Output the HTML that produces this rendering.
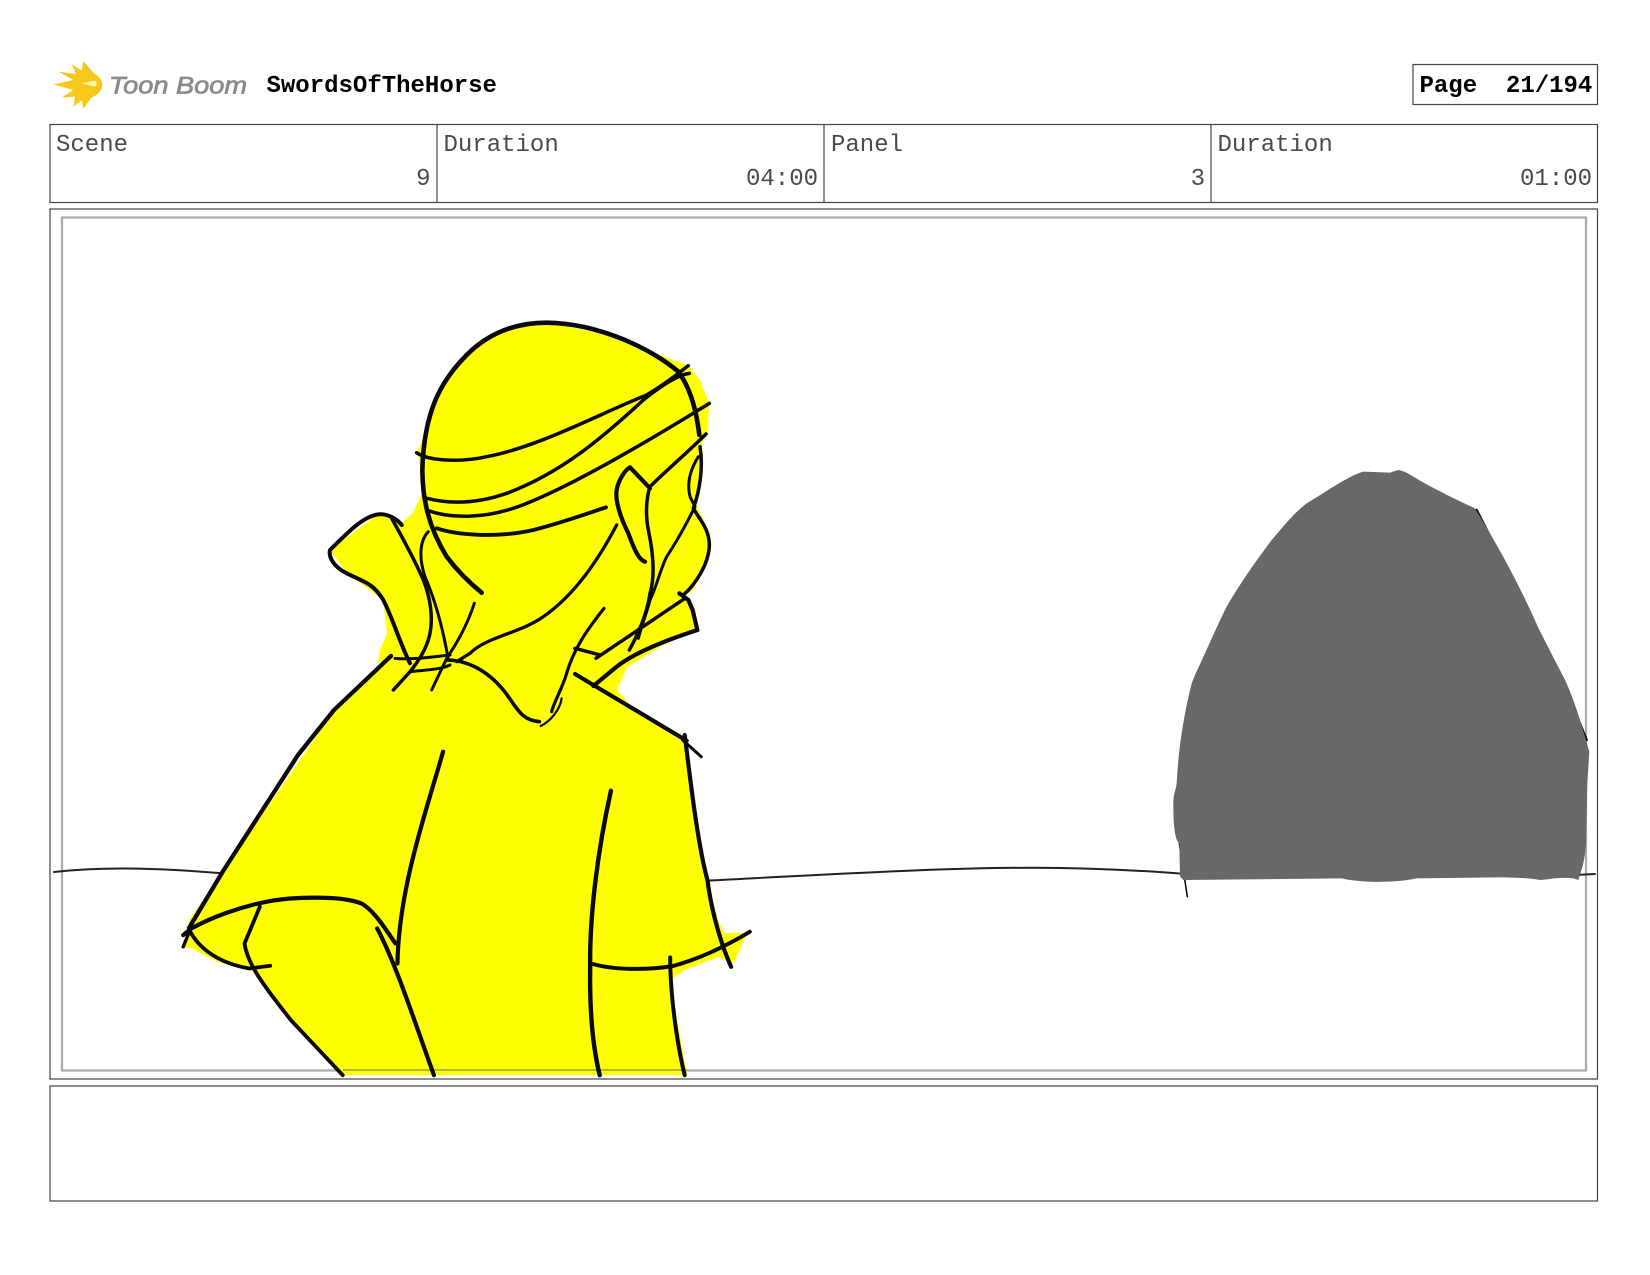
<!DOCTYPE html>
<html>
<head>
<meta charset="utf-8">
<title>SwordsOfTheHorse</title>
<style>
html,body{margin:0;padding:0;background:#fff;width:1650px;height:1275px;overflow:hidden}
svg{display:block;position:absolute;left:0;top:0}
.s{fill:none;stroke:#0a0a0a;stroke-linecap:round;stroke-linejoin:round;vector-effect:non-scaling-stroke}
.m{font-family:"Liberation Mono",monospace;font-size:24px;fill:#4a4a4a}
.b{font-family:"Liberation Mono",monospace;font-size:24px;font-weight:bold;fill:#000}
</style>
</head>
<body>
<svg width="1650" height="1275" viewBox="0 0 1650 1275" xmlns="http://www.w3.org/2000/svg">
<rect width="1650" height="1275" fill="#fff"/>

<!-- logo -->
<g transform="translate(40,50) scale(.3333)">
<path fill="#f8c71c" d="M40 103 L100 90 L55 65 L108 72 L95 42 L125 62 L130 33 L158 66 C178 80 187 90 187 103 C187 120 175 135 155 142 L130 177 L125 150 L100 170 L105 140 L65 143 L100 120 Z"/>
<path fill="#fff3b0" d="M125 100 L165 92 C172 98 172 106 165 110 Z"/>
</g>
<text x="109" y="93.5" font-family="'Liberation Sans',sans-serif" font-style="italic" font-size="24" fill="#8a8a8a" stroke="#8a8a8a" stroke-width=".7" textLength="138" lengthAdjust="spacingAndGlyphs">Toon Boom</text>
<text class="b" x="266.5" y="92">SwordsOfTheHorse</text>

<!-- page box -->
<rect x="1413" y="64.5" width="184.5" height="40" fill="#fff" stroke="#444" stroke-width="1.2"/>
<text class="b" x="1419.5" y="92" xml:space="preserve">Page  21/194</text>

<!-- header table -->
<rect x="50" y="124.5" width="1547.5" height="78" fill="#fff" stroke="#444" stroke-width="1.2"/>
<path d="M437 124.5V202.5M824 124.5V202.5M1211 124.5V202.5" stroke="#444" stroke-width="1.2" fill="none"/>
<text class="m" x="56" y="151">Scene</text>
<text class="m" x="443.5" y="151">Duration</text>
<text class="m" x="831" y="151">Panel</text>
<text class="m" x="1217.5" y="151">Duration</text>
<text class="m" x="430.5" y="185" text-anchor="end">9</text>
<text class="m" x="818" y="185" text-anchor="end">04:00</text>
<text class="m" x="1205" y="185" text-anchor="end">3</text>
<text class="m" x="1592" y="185" text-anchor="end">01:00</text>

<!-- panel -->
<rect x="50" y="209" width="1547.5" height="870" fill="#fff" stroke="#444" stroke-width="1.2"/>
<rect x="62" y="217.5" width="1524" height="853" fill="none" stroke="#aaa" stroke-width="2.2"/>

<!-- horizon -->
<path class="s" style="stroke:#222" stroke-width="2" d="M54 872 C90 868 140 866 230 874"/>
<path class="s" style="stroke:#222" stroke-width="2" d="M700 881 C800 876 960 866 1060 868 C1110 869 1150 871 1185 874"/>
<path class="s" style="stroke:#222" stroke-width="2" d="M1575 875 L1595 874"/>

<!-- yellow figure -->
<path fill="#ffff00" d="M547 323 L600 333 L647 350 L673 360 L688 365 L700 380 L709 403 L708 430 L702 443 L703 467 L697 507 L710 533 L708 563 L693 590 L683 597 L693 610 L698 630 L667 643 L627 667 L617 690 L633 708 L685 737 L707.5 880 L718 920 L724 933 L747 933 L734 963 L718 957 L685 970 L670 980 L687 1075 L343 1075 L291 1020 L262 983 L251.5 970 L220 963 L200 953 L191 948 L183 948 L189 920 L222.5 872 L334.5 710 L391.7 656 L378 663 L380 650 L387 633 L383 600 L347 573 L330 550 L378 514 L403 522 L413 513 L422 493 L418 450 L425 433 L432 405 L446 378 L467 355 L490 338 L513 327 Z"/>
<path d="M343 1070 H687" stroke="#b5b53a" stroke-width="2" fill="none"/>

<!-- head strokes -->
<g transform="translate(300,300) scale(.33333)">
<path class="s" stroke-width="4.6" d="M1198 405 C1190 340 1175 270 1135 215 C1060 150 900 70 740 68 C640 68 560 105 500 165 C425 240 372 330 367 510 C368 600 385 680 440 770 C470 810 510 850 545 878"/>
<path class="s" stroke-width="3.5" d="M350 458 C380 480 470 490 560 470 C720 440 900 340 1040 285 C1090 255 1130 225 1165 197"/>
<path class="s" stroke-width="3.5" d="M380 595 C440 610 520 615 620 580 C780 520 900 420 1030 300 C1080 260 1130 225 1168 220"/>
<path class="s" stroke-width="3.5" d="M385 632 C450 655 560 660 680 610 C830 550 1050 420 1228 310"/>
<path class="s" stroke-width="3.8" d="M410 685 C470 705 590 715 700 690 C780 670 850 645 918 622"/>
<path class="s" stroke-width="4.2" d="M1035 785 C1015 780 1000 740 985 700 C960 650 945 600 950 570 C955 540 975 510 990 502 L1050 565"/>
<path class="s" stroke-width="3.5" d="M1218 402 C1160 460 1100 510 1050 560 C1040 590 1035 640 1045 690 C1060 760 1065 830 1050 880 C1040 950 1010 1010 988 1050"/>
<path class="s" stroke-width="3.5" d="M1200 440 C1210 500 1200 570 1180 625 C1200 660 1230 690 1228 740 C1225 790 1190 850 1150 885"/>
<path class="s" stroke-width="3" d="M1195 470 C1170 510 1160 550 1170 590 L1185 620 C1170 650 1140 710 1100 770 C1080 810 1070 860 1050 900 C1040 940 1030 960 1015 1015"/>
<path class="s" stroke-width="3.5" d="M888 1075 L1155 895"/>
<path class="s" stroke-width="4.2" d="M1138 880 L1165 900 L1178 930 L1192 990 C1100 1020 1000 1060 950 1100 L880 1158"/>
<path class="s" stroke-width="3.3" d="M950 675 C900 770 830 880 730 950 C660 1000 560 1010 510 1060 L470 1085"/>
<path class="s" stroke-width="3.5" d="M825 1045 L900 1065"/>
<path class="s" stroke-width="3.2" d="M912 925 C860 990 820 1050 800 1120 C785 1170 760 1210 755 1235"/>
<path class="s" stroke-width="2.2" d="M785 1195 C780 1230 750 1265 722 1278"/>
<path class="s" stroke-width="3" d="M285 1075 C340 1080 400 1070 450 1065"/>
<path class="s" stroke-width="3" d="M330 1115 C370 1110 420 1110 450 1095"/>
<path class="s" stroke-width="3.6" d="M440 1080 C500 1080 560 1110 610 1170 C650 1220 660 1260 718 1265"/>
<path class="s" stroke-width="4" d="M305 675 C290 655 260 640 235 643 C190 650 150 690 90 750 C85 770 100 800 140 820 C190 845 220 850 250 900 C280 960 300 1030 330 1090"/>
<path class="s" stroke-width="3.5" d="M275 655 C300 700 340 770 370 840 C390 890 400 950 390 1000 C380 1050 350 1090 330 1115 L280 1170"/>
<path class="s" stroke-width="3" d="M385 695 C360 720 355 770 375 830 C405 900 430 990 445 1080"/>
<path class="s" stroke-width="3" d="M523 910 C500 980 470 1030 440 1075 L395 1170"/>
<path class="s" stroke-width="4.2" d="M825 1122 L880 1155 L1160 1322"/>
</g>

<!-- left shoulder as single stroke -->
<path class="s" stroke-width="4.3" d="M391 656 L334 710 L298 755 L222.5 872 L189 928"/>

<!-- body strokes -->
<g transform="translate(150,700) scale(.4145,.3335)">
<path class="s" stroke-width="4.2" d="M80 705 L100 685 C150 650 220 620 280 605 C340 590 460 585 510 610 C540 630 570 690 592 730"/>
<path class="s" stroke-width="3.8" d="M95 690 C120 750 170 790 240 805 L290 797"/>
<path class="s" stroke-width="3.4" d="M80 740 L100 680"/>
<path class="s" stroke-width="3.8" d="M265 620 L228 730 C235 790 270 850 340 960 L465 1125"/>
<path class="s" stroke-width="4.2" d="M707 155 C670 320 600 560 597 790"/>
<path class="s" stroke-width="4.2" d="M548 685 C590 780 640 970 685 1125"/>
<path class="s" stroke-width="4.4" d="M1112 272 C1080 450 1060 650 1062 800 C1060 950 1070 1050 1085 1125"/>
<path class="s" stroke-width="4.2" d="M1290 105 C1300 200 1320 430 1345 540 C1355 640 1380 740 1402 800"/>
<path class="s" stroke-width="3" d="M1285 120 L1330 170"/>
<path class="s" stroke-width="4" d="M1070 792 C1120 810 1200 810 1260 798 C1330 775 1400 730 1447 695"/>
<path class="s" stroke-width="4" d="M1255 772 C1255 900 1275 1050 1290 1125"/>
</g>

<!-- gray rock -->
<g transform="translate(1150,450) scale(.33333)">
<path class="s" stroke-width="2.4" d="M980 180 L1225 660 L1310 870"/>
<path class="s" stroke-width="2.4" d="M240 470 L310 360"/>
<path class="s" stroke-width="1.6" d="M100 860 C90 920 84 980 82 1030"/>
<path class="s" stroke-width="1.6" d="M88 1180 L112 1340"/>
<path fill="#686868" d="M100 1290 L90 1280 L88 1180 C75 1170 70 1130 70 1060 C70 1030 78 1020 80 1000 C85 900 100 800 125 700 L135 675 C170 600 200 530 230 470 C270 400 320 330 365 270 C400 230 430 190 470 160 C530 125 590 80 640 65 L720 68 L745 60 C770 65 790 80 810 92 C860 120 920 150 975 175 C1040 280 1100 390 1150 500 C1180 570 1220 640 1240 680 C1270 740 1290 810 1305 860 L1318 905 L1312 1000 L1308 1180 C1305 1230 1295 1260 1285 1290 L1270 1285 C1220 1280 1190 1290 1170 1290 C1150 1285 1100 1282 1040 1282 L800 1285 C740 1298 640 1300 575 1285 Z"/>
</g>

<!-- notes box -->
<rect x="50" y="1086" width="1547.5" height="115" fill="#fff" stroke="#444" stroke-width="1.2"/>
</svg>
</body>
</html>
